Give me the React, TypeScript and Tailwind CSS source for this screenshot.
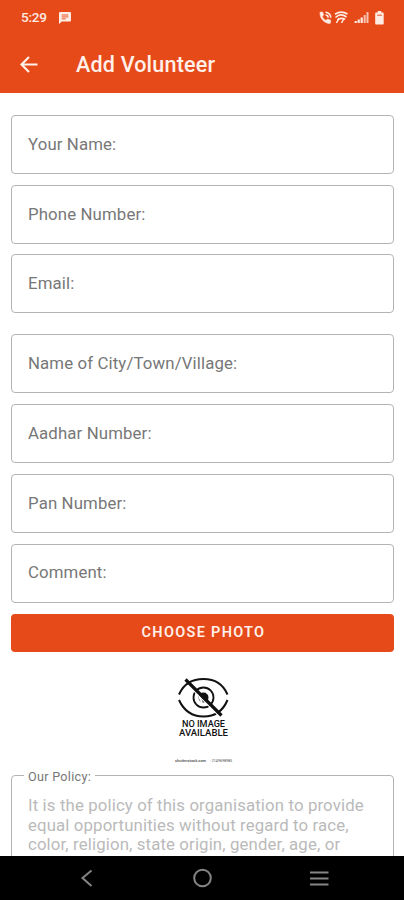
import React from "react";

function Field({ label, className = "" }: { label: string; className?: string }) {
  return (
    <div
      className={`flex h-[59px] shrink-0 items-center rounded-[4px] border border-[#b4b4b4] pl-4 text-[16.8px] tracking-[0.13px] text-[#777] ${className}`}
    >
      {label}
    </div>
  );
}

function StatusBar() {
  return (
    <div className="flex h-[35px] items-center pl-[21px] pr-[19px] text-[#ffece4]">
      <span className="w-[38px] text-[13.5px] font-medium leading-none tracking-[-0.2px]">5:29</span>
      <svg className="h-3 w-3" viewBox="0 0 12 12">
        <path d="M1 0h10q1 0 1 1v7.5q0 1-1 1H2.8L0 12V1q0-1 1-1z" fill="currentColor" />
        <path d="M2.7 3h6.6M2.7 4.9h6.6M2.7 6.8h4" stroke="#e64a19" strokeWidth=".9" />
      </svg>
      <svg className="ml-auto h-4 w-[66px]" viewBox="0 0 66 16" fill="none" stroke="currentColor">
        <path
          d="M1 2.2L3.6 2l1 3.1-1.4 1.3c.8 1.8 2.1 3.2 3.8 4.1l1.4-1.4 3.1 1v2.6c0 .5-.4.8-.9.8C5.4 13.2 1 8.7 1 3z"
          fill="currentColor"
          strokeWidth=".6"
        />
        <path d="M6.5 2.2a5.5 5.5 0 0 1 5.3 5.5M6.5 4.9a2.8 2.8 0 0 1 2.7 2.8" strokeWidth="1.5" />
        <path d="M16 4.2q6-4 12.500-.2M16.500 7.500q5-5 11-.5M18.500 10q3.500-3 7.500-.5" strokeWidth="1.7" />
        <path d="M17.500 13l2.500-5M22.500 13l2.500-4.500" strokeWidth="1.5" />
        <path d="M36.7 13v-2M39.7 13V9.5M42.7 13V7.5" strokeWidth="2.2" />
        <path d="M45.7 13V5M48.5 13V2" strokeWidth="2" opacity=".75" />
        <path d="M57 2.5h1.700V1h3.600v1.500h1.700q.7 0 .7.700v10.500q0 .8-.7.800h-7q-.8 0-.8-.8V3.200q0-.7.800-.7z" fill="currentColor" stroke="none" />
        <path d="M58.2 5.2h4.600" stroke="#e64a19" strokeWidth="1" />
      </svg>
    </div>
  );
}

function NoImage() {
  return (
    <svg className="mx-auto mt-[20px] block h-[96px] w-[72px] shrink-0" viewBox="0 0 72 96" fill="none">
      <path d="M12 22.500C17 11 26 7 36.500 7S56 12 60.500 22.500M12 28C17 39 26 44.500 36.500 44.500S56 39 60.500 28" stroke="#111" strokeWidth="2" />
      <circle cx="36.5" cy="25.5" r="10" stroke="#111" strokeWidth="1.8" />
      <circle cx="36.5" cy="25.5" r="5" fill="#111" />
      <path d="M32 25l3 5" stroke="#fff" strokeWidth="1.8" />
      <path d="M22 14L52.500 44.500" stroke="#fff" strokeWidth="1.2" />
      <path d="M18.500 7.500L54.500 43.500" stroke="#111" strokeWidth="3.2" />
      <text x="36.5" y="55.4" textAnchor="middle" fontSize="8.8" fontWeight="500" textLength="43" lengthAdjust="spacingAndGlyphs" fill="#111">NO IMAGE</text>
      <text x="36.5" y="64.4" textAnchor="middle" fontSize="8.8" fontWeight="500" textLength="49" lengthAdjust="spacingAndGlyphs" fill="#111">AVAILABLE</text>
      <text x="8" y="89.5" fontSize="4.2" fontWeight="700" textLength="31" lengthAdjust="spacingAndGlyphs" fill="#666">shutterstock.com</text>
      <text x="43" y="89.5" fontSize="4.2" textLength="22" lengthAdjust="spacingAndGlyphs" fill="#444">· 2149698985</text>
    </svg>
  );
}

function Policy() {
  return (
    <fieldset className="-mt-px h-[110px] min-w-0 shrink-0 rounded-[4px] border border-[#b4b4b4] pl-4 text-[#bababa]">
      <legend className="-ml-1 px-1 pt-[3px] text-[12.6px] leading-[14px] tracking-[0.3px] text-[#777]">Our Policy:</legend>
      <p className="mt-[12px] whitespace-nowrap text-[16.8px] leading-[19.7px] tracking-[0.13px]">
        It is the policy of this organisation to provide
        <br />
        equal opportunities without regard to race,
        <br />
        color, religion, state origin, gender, age, or
      </p>
    </fieldset>
  );
}

export default function App() {
  return (
    <div className="flex h-[900px] w-[404px] flex-col overflow-hidden bg-white font-['Roboto',sans-serif]">
      <header className="h-[93px] shrink-0 bg-[#e64a19] text-[#fff0e9]">
        <StatusBar />
        <div className="flex h-[59px] items-center pl-[20px]">
          <svg className="h-[18px] w-[18px]" viewBox="0 0 18 18" fill="none" stroke="currentColor" strokeWidth="2.2">
            <path d="M17.500 8.500H2M9 1L1.500 8.500 9 16" />
          </svg>
          <h1 className="ml-[38px] text-[21.5px] font-medium leading-none tracking-[0.2px]">Add Volunteer</h1>
        </div>
      </header>
      <main className="flex min-h-0 flex-1 flex-col overflow-hidden pl-[11px] pr-[10px] pt-[22px]">
        <div className="flex shrink-0 flex-col gap-[10.7px]">
          <Field label="Your Name:" />
          <Field label="Phone Number:" />
          <Field label="Email:" />
          <Field label="Name of City/Town/Village:" className="mt-[10.4px]" />
          <Field label="Aadhar Number:" />
          <Field label="Pan Number:" />
          <Field label="Comment:" />
        </div>
        <button className="mt-[11.4px] h-[38px] shrink-0 rounded-[4px] bg-[#e64a19] pl-[2px] text-[14.5px] font-semibold tracking-[1.3px] text-[#fff0e9]">
          CHOOSE PHOTO
        </button>
        <NoImage />
        <Policy />
      </main>
      <nav className="flex h-[44px] shrink-0 items-center bg-black">
        <svg className="h-[44px] w-full" viewBox="0 0 404 44" fill="none" stroke="#858585" strokeWidth="2">
          <path d="M91.500 14.500L82.500 22l9 8" />
          <circle cx="202.5" cy="22" r="8.3" />
          <path d="M310 16.500h18.500M310 22.500h18.500M310 28.500h18.500" />
        </svg>
      </nav>
    </div>
  );
}
